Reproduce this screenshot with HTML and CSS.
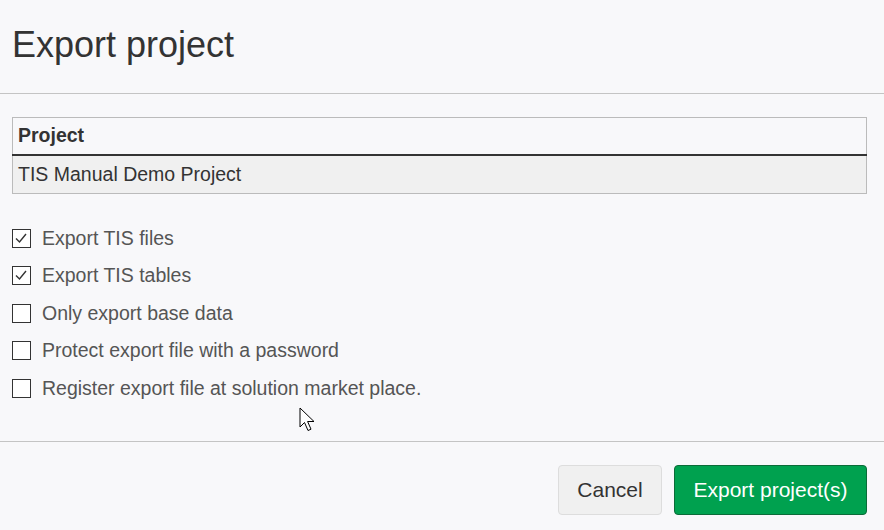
FILE: index.html
```html
<!DOCTYPE html>
<html>
<head>
<meta charset="utf-8">
<link rel="stylesheet" href="styles.css">
</head>
<body>
<div class="dialog">
  <div class="header"><h1 class="title">Export project</h1></div>
  <div class="body">
    <table class="tbl">
      <thead><tr><th>Project</th></tr></thead>
      <tbody><tr><td>TIS Manual Demo Project</td></tr></tbody>
    </table>
    <div class="options">
      <label class="opt"><span class="box checked"><svg viewBox="0 0 18 18" width="18" height="18"><path d="M4 9.5 L7.5 13 L14 5" fill="none" stroke="#333" stroke-width="1.4"/></svg></span>Export TIS files</label>
      <label class="opt"><span class="box checked"><svg viewBox="0 0 18 18" width="18" height="18"><path d="M4 9.5 L7.5 13 L14 5" fill="none" stroke="#333" stroke-width="1.4"/></svg></span>Export TIS tables</label>
      <label class="opt"><span class="box"></span>Only export base data</label>
      <label class="opt"><span class="box"></span>Protect export file with a password</label>
      <label class="opt"><span class="box"></span>Register export file at solution market place.</label>
    </div>
  </div>
  <div class="footer">
    <button class="btn cancel">Cancel</button>
    <button class="btn primary">Export project(s)</button>
  </div>
  <svg class="cursor" width="20" height="28" viewBox="0 0 20 28"><path d="M1 1 L1 20 L5.5 15.5 L9 23.5 L12 22.2 L8.6 14.5 L15 14.5 Z" fill="#fff" stroke="#000" stroke-width="1"/></svg>
</div>
</body>
</html>
```
FILE: styles.css
```css
html, body { margin: 0; padding: 0; }
body {
  background: #f8f8fa;
  font-family: "Liberation Sans", Arial, sans-serif;
  width: 884px;
  height: 530px;
  overflow: hidden;
}
.dialog { position: relative; width: 884px; height: 530px; }
.header {
  height: 94px;
  border-bottom: 1px solid #c4c4c4;
  box-sizing: border-box;
  padding: 23px 12px 0;
}
.title {
  margin: 0;
  font-weight: normal;
  font-size: 36px;
  line-height: 44px;
  color: #333;
}
.body {
  padding: 23px 17px 0 12px;
  height: 348px;
  box-sizing: border-box;
  border-bottom: 1px solid #c4c4c4;
}
.tbl {
  width: 855px;
  border-collapse: collapse;
  border: 1px solid #bbb;
  font-size: 19.5px;
  color: #333;
}
.tbl th {
  text-align: left;
  font-weight: bold;
  height: 37px;
  padding: 0 5px;
  background: #f8f8fa;
  border-bottom: 2px solid #333;
  box-sizing: border-box;
}
.tbl td {
  height: 37px;
  padding: 0 5px;
  background: #f0f0f0;
  color: #333;
}
.options { padding-top: 26px; display: flex; flex-direction: column; }
.opt {
  display: flex;
  align-items: center;
  height: 37.5px;
  font-size: 19.5px;
  color: #555;
}
.box {
  width: 19px;
  height: 19px;
  border: 1px solid #333;
  box-sizing: border-box;
  background: #fff;
  margin-right: 11px;
  position: relative;
  display: inline-block;
  flex: none;
}
.box svg { position: absolute; left: -1px; top: -1px; }
.footer {
  display: flex;
  justify-content: flex-end;
  gap: 12px;
  padding: 23px 17px 0 0;
}
.btn {
  height: 50px;
  font-family: "Liberation Sans", Arial, sans-serif;
  font-size: 21px;
  border-radius: 4px;
  padding: 0;
  cursor: pointer;
}
.cancel {
  width: 104px;
  background: #f0f0f0;
  border: 1px solid #ddd;
  color: #333;
}
.primary {
  width: 193px;
  background: #00a14f;
  border: 1px solid #0b6b38;
  color: #fff;
}
.cursor { position: absolute; left: 299px; top: 407px; }
```
